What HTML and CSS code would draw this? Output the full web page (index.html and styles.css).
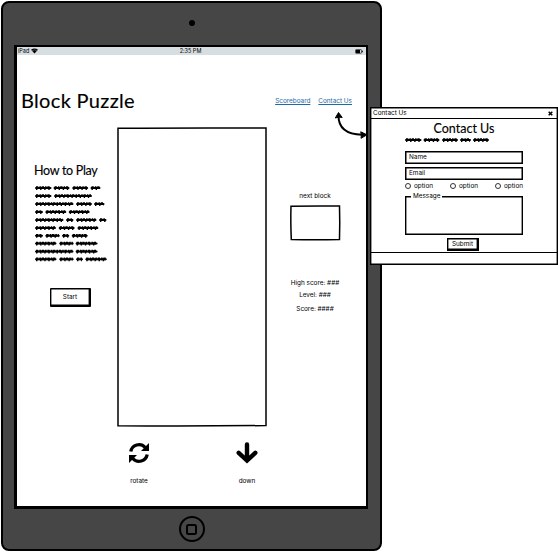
FILE: index.html
```
<!DOCTYPE html>
<html lang="en">
<head>
<meta charset="utf-8">
<title>Block Puzzle</title>
<link rel="stylesheet" href="styles.css">
</head>
<body>
<div class="tablet">
  <div class="camera"></div>
  <main class="screen">
    <div class="status">
      <span class="carrier">iPad <svg width="7" height="6" viewBox="0 0 7 6"><path d="M0 1.8Q3.5-1 7 1.8L3.5 5.6Z"/><path d="M1 2.8Q3.5.9 6 2.8" fill="none" stroke="#d7dee1" stroke-width=".35"/></svg></span>
      <span>2:35 PM</span>
      <svg class="battery" width="8" height="5" viewBox="0 0 8 5"><rect x=".5" y=".6" width="6" height="3.7" rx=".7" fill="none" stroke="#111" stroke-width=".7"/><path d="M1 1h4v3H1zM7 1.700h.8v1.600H7z"/></svg>
    </div>
    <header class="top">
      <h1>Block Puzzle</h1>
      <nav><a>Scoreboard</a><a>Contact Us</a></nav>
    </header>
    <div class="game">
      <section class="help">
        <h2>How to Play</h2>
        <svg class="scribble" width="74" height="80" viewBox="0 0 74 80">
          <defs>
            <g id="rows">
              <path d="M1 4h14.500M19.500 4h14M38.200 4h14M56.500 4h8"/>
              <path d="M1 12h14.500M20 12h36"/>
              <path d="M1 20h36.500M42 20h14M60 20h8.500"/>
              <path d="M1 28h6M11.300 28h19M34.700 28h19"/>
              <path d="M1 36h26.500M32 36h5.500M42 36h18.500M65 36h5.500"/>
              <path d="M1 44h19M24.700 44h14M43.400 44h19"/>
              <path d="M1 51.800h6M11.300 51.800h12.500M28 51.800h5.300M37.700 51.800h14"/>
              <path d="M1 59.600h19.500M25.200 59.600h12.500M41.600 59.600h20"/>
              <path d="M1 67.500h36.500M41.600 67.500h20"/>
              <path d="M1 75.300h19.500M25.200 75.300h12.500M42 75.300h5M51.300 75.300h19.500"/>
            </g>
          </defs>
          <use href="#rows" class="ink"/><use href="#rows" class="bumps" y="-.4"/><use href="#rows" class="loops" y=".5"/>
        </svg>
        <button class="start">Start</button>
      </section>
      <div class="board"><svg width="150" height="300" viewBox="0 0 150 300"><path d="M1 1.200Q70 .7 149 1Q149.500 140 149 298.500Q70 299.500 1 298.800Q.5 130 1 1.200Z"/></svg></div>
      <aside class="stats">
        <p class="next-label">next block</p>
        <svg class="next" width="51" height="36" viewBox="0 0 51 36"><path d="M1 1.200Q25 .7 49.500 1Q50 18 49.500 34.500Q25 35 1.300 34.500Q.5 16 1 1.200Z"/></svg>
        <p class="high">High score: ###</p>
        <p class="level">Level: ###</p>
        <p class="score">Score: ####</p>
      </aside>
    </div>
    <div class="controls">
      <div class="control"><svg width="22" height="22" viewBox="0 0 22 22"><path d="M2.800 9.500A8.300 8.300 0 0 1 17.200 5.500M19.200 12.500A8.300 8.300 0 0 1 4.800 16.500" fill="none" stroke="#000" stroke-width="3.300"/><path d="M21 1v8h-8zM1 21v-8h8z"/></svg><span>rotate</span></div>
      <div class="control"><svg width="22" height="22" viewBox="0 0 22 22"><path d="M11 2.500v15.500M2.700 10.800L11 18.500L19.300 10.800" fill="none" stroke="#000" stroke-width="4.400" stroke-linecap="round" stroke-linejoin="miter"/></svg><span>down</span></div>
    </div>
  </main>
  <div class="home"><i></i></div>
</div>
<svg class="arrow" width="34" height="30" viewBox="0 0 34 30"><path d="M5.500 6Q5.500 24 29 24.800" fill="none" stroke="#000" stroke-width="2"/><path d="M5.500 2.500L9.200 7.500Q6 6.500 2.300 8ZM34 24.800L28 28.300Q29 24.800 27.700 21.800Z" stroke="#000" stroke-linejoin="round"/></svg>
<section class="window">
  <div class="titlebar"><span>Contact Us</span><svg width="5" height="5" viewBox="0 0 5 5"><path d="M.7.7L4.300 4.300M4.300.7L.7 4.300" stroke="#000" stroke-width="1.500"/></svg></div>
  <form class="form">
    <h2>Contact Us</h2>
    <svg class="scribble" width="86" height="6" viewBox="0 0 86 6">
      <defs><path id="line" d="M1 3h14.500M19.500 3h14M38 3h14M56 3h9M69 3h14"/></defs>
      <use href="#line" class="ink"/><use href="#line" class="bumps" y="-.4"/><use href="#line" class="loops" y=".5"/>
    </svg>
    <div class="field name">Name</div>
    <div class="field">Email</div>
    <div class="options"><label><i></i>option</label><label><i></i>option</label><label><i></i>option</label></div>
    <div class="message"><span>Message</span></div>
    <button type="button" class="submit">Submit</button>
  </form>
  <div class="footer"></div>
</section>
</body>
</html>
```
FILE: styles.css
```
* { box-sizing: border-box; }
body { margin: 0; width: 558px; height: 553px; overflow: hidden; position: relative; background: #fff; color: #000; font: 6.400px/8px Inter, "Liberation Sans", sans-serif; }
h1, h2, p { margin: 0; font-weight: 400; white-space: nowrap; }
h1, h2 { font-family: Lato, "Liberation Sans", sans-serif; -webkit-text-stroke: .15px #000; }
svg { display: block; overflow: visible; }
button { font: inherit; color: inherit; background: #fff; padding: 0; display: block; }
.tablet { width: 381px; height: 550px; margin: 1px 0 0 1px; background: #464646; border: 2px solid #000; border-radius: 8px; display: flex; flex-direction: column; align-items: center; position: absolute; }
.camera { width: 6px; height: 6px; border-radius: 50%; background: #000; margin-top: 17px; }
.screen { width: 354px; height: 464px; margin: 19px 1px 0 0; background: #fff; border: 2px solid #000; border-left-width: 3px; border-bottom-width: 3px; display: flex; flex-direction: column; flex: none; }
.status { height: 8px; background: #d7dee1; display: grid; grid-template-columns: 1fr auto 1fr; align-items: center; padding: 0 3px 0 1px; font-size: 5.500px; line-height: 8px; }
.carrier { display: flex; gap: 2px; align-items: center; }
.battery { justify-self: end; }
.top { display: flex; justify-content: space-between; padding: 34px 14px 0 4px; height: 72px; }
h1 { font-size: 20px; line-height: 22px; letter-spacing: .33px; }
nav { display: flex; gap: 8px; padding-top: 8px; color: #1b6ba8; height: 17px; }
nav a { text-decoration: underline; text-decoration-thickness: .7px; }
.game { display: grid; grid-template-columns: 100px 150px 1fr; height: 300px; }
.board path, .next path { fill: none; stroke: #000; stroke-width: 1.500; }
.help { padding: 36px 0 0 17px; }
.help h2 { font-size: 12.500px; line-height: 16px; letter-spacing: -.3px; }
.scribble { fill: none; stroke: #000; stroke-linecap: butt; }
.help .scribble { margin: 5px 0 0 1px; }
.ink { stroke-width: 2; stroke-linecap: round; }
.bumps { stroke-width: 2.700; stroke-dasharray: 2.300 1.100 1.500 .8; }
.loops { stroke-width: 3; stroke-dasharray: 1.400 2.700; }
.start { width: 41px; height: 19px; margin: 24px 0 0 16px; border: 1px solid #000; border-right-width: 2px; border-bottom-width: 2px; border-radius: 1px; box-shadow: inset 0 0 0 .4px #000; }
.stats { display: flex; flex-direction: column; align-items: center; padding: 65px 3px 0 0; }
.next { margin-top: 5px; }
.high { margin-top: 38px; }
.level { margin-top: 4px; }
.score { margin-top: 6px; }
.controls { display: grid; grid-template-columns: 22px 22px; column-gap: 86px; padding: 15px 0 0 111px; }
.control { display: flex; flex-direction: column; align-items: center; gap: 13px; }
.home { width: 26px; height: 26px; margin-top: 7px; border: 2px solid #000; border-radius: 50%; display: grid; place-items: center; flex: none; }
.home i { width: 11px; height: 11px; border: 2px solid #000; border-radius: 2.500px; }
.arrow { position: absolute; left: 333px; top: 110px; z-index: 1; }
.window { position: absolute; left: 370px; top: 107px; width: 188px; height: 158px; border: 1px solid #000; box-shadow: inset 0 0 0 .4px #000; background: #fff; display: flex; flex-direction: column; }
.titlebar { height: 11px; border-bottom: 1px solid #000; display: flex; justify-content: space-between; align-items: center; padding: 0 4px 0 2px; flex: none; }
.form { width: 118px; margin-left: 34px; height: 134px; }
.form h2 { font-size: 12.500px; line-height: 14px; text-align: center; margin-top: 3px; }
.form .scribble { margin: 1px 0 8px; }
.field { height: 13px; border: 1px solid #000; box-shadow: inset 0 0 0 .5px #000; padding-left: 3px; line-height: 11px; }
.name { margin-bottom: 3px; }
.options { display: flex; justify-content: space-between; padding-top: 2px; height: 12px; }
.options label { display: flex; gap: 3px; align-items: center; height: 8px; }
.options i { width: 6px; height: 6px; border: .7px solid #333; border-radius: 50%; }
.message { height: 39px; margin-top: 4px; border: 1px solid #000; box-shadow: inset 0 0 0 .4px #000; }
.message span { display: block; width: 31px; height: 8px; margin: -5px 0 0 5px; padding-left: 2px; background: #fff; }
.submit { width: 32px; height: 13px; margin: 3px 0 0 42px; border: 1px solid #000; border-right-width: 2px; border-bottom-width: 2px; line-height: 8px; box-shadow: inset 0 0 0 .4px #000; }
.footer { height: 12px; border-top: 1px solid #000; flex: none; }
```
